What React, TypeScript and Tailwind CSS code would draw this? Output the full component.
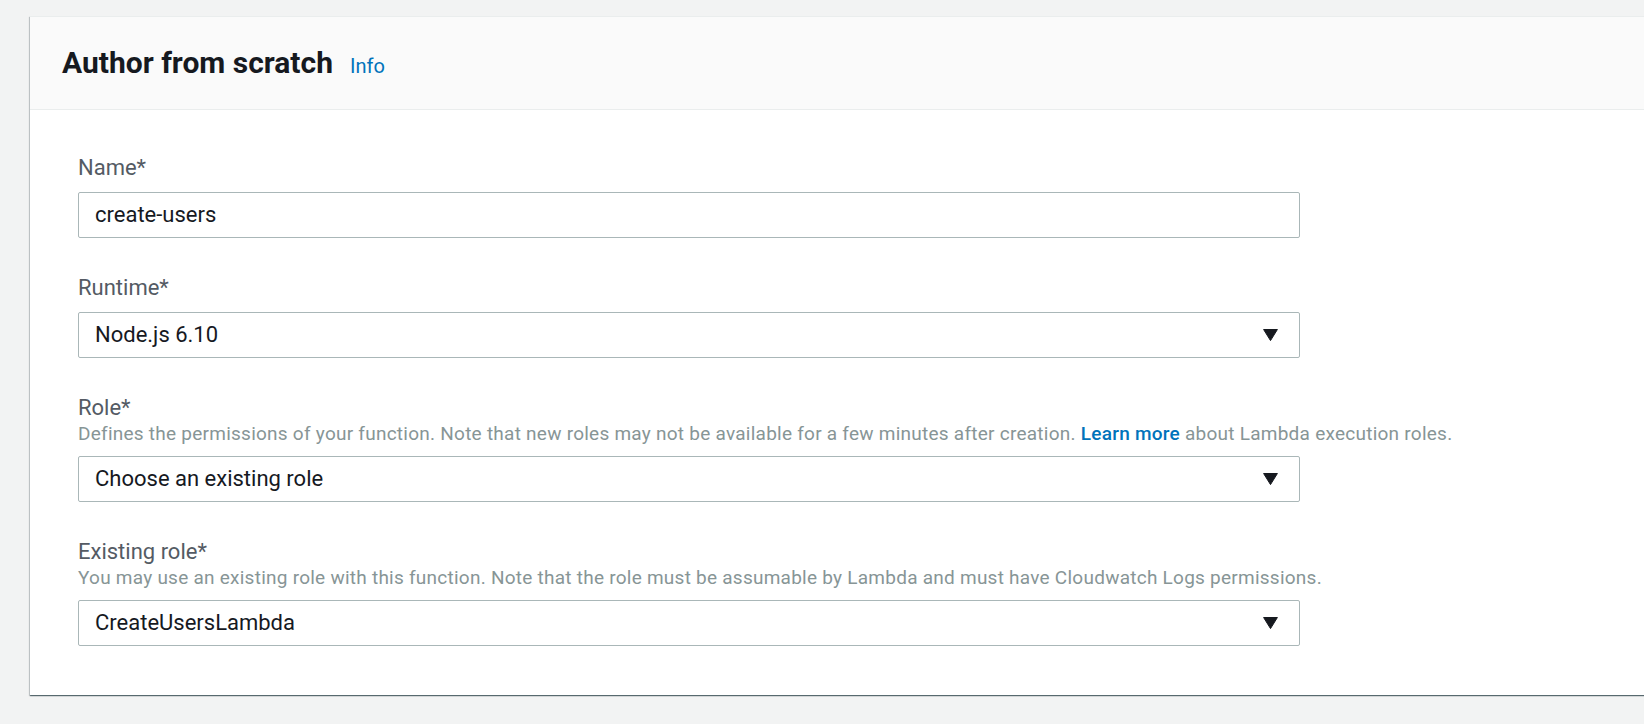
import type { ReactNode } from "react";

const font = { fontFamily: "Roboto, 'Liberation Sans', sans-serif" };

function Caret() {
  return (
    <svg width="15" height="12" viewBox="0 0 15 12" className="shrink-0">
      <path d="M0.6 0.5 H14.4 L7.5 11.6 Z" fill="#16191f" stroke="#16191f" strokeWidth="1" strokeLinejoin="round" />
    </svg>
  );
}

type FieldProps = {
  label: string;
  help?: ReactNode;
  value: string;
  select?: boolean;
};

function Field({ label, help, value, select }: FieldProps) {
  return (
    <div className="flex flex-col">
      <span className="text-[22px] leading-[28px] text-[#545b64]">{label}</span>
      {help && (
        <span className="text-[19px] leading-[24px] tracking-[0.25px] text-[#879596]">{help}</span>
      )}
      <div className="mt-[10px] flex h-[46px] w-[1222px] items-center justify-between rounded-[2px] border border-[#aab7b8] bg-white pl-[16px] pr-[21px]">
        <span className="text-[22px] leading-[28px] text-[#16191f]">{value}</span>
        {select && <Caret />}
      </div>
    </div>
  );
}

export default function App() {
  return (
    <div className="h-[724px] w-full overflow-hidden bg-[#f2f3f3] pl-[30px] pt-[16px]" style={font}>
      <div className="w-[1660px] border-t border-[#eaeded] bg-white shadow-[0_1px_1px_0_rgba(0,28,36,0.5),1px_1px_1px_0_rgba(0,28,36,0.15),-1px_1px_1px_0_rgba(0,28,36,0.15)]">
        {/* panel header */}
        <div className="flex h-[93px] items-center border-b border-[#eaeded] bg-[#fafafa] px-[32px]">
          <div className="flex items-baseline">
            <h2 className="text-[30px] font-bold leading-[36px] text-[#16191f]">Author from scratch</h2>
            <span className="ml-[17px] text-[20px] leading-[24px] text-[#0073bb]">Info</span>
          </div>
        </div>

        {/* form */}
        <div className="flex flex-col gap-[36px] pb-[49px] pl-[48px] pt-[44px]">
          <Field label="Name*" value="create-users" />
          <Field label="Runtime*" value="Node.js 6.10" select />
          <Field
            label="Role*"
            help={
              <>
                Defines the permissions of your function. Note that new roles may not be available for a few minutes after creation.{" "}
                <span className="font-medium text-[#0073bb]">Learn more</span> about Lambda execution roles.
              </>
            }
            value="Choose an existing role"
            select
          />
          <Field
            label="Existing role*"
            help="You may use an existing role with this function. Note that the role must be assumable by Lambda and must have Cloudwatch Logs permissions."
            value="CreateUsersLambda"
            select
          />
        </div>
      </div>
    </div>
  );
}
